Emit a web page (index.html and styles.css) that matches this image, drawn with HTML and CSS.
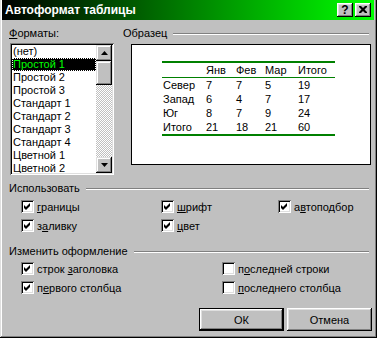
FILE: index.html
```html
<!DOCTYPE html>
<html lang="ru">
<head>
  <meta charset="UTF-8" />
  <title>Автоформат таблицы</title>
  <link rel="stylesheet" href="styles.css">
</head>
<body>
  <div class="window">
    <div class="titlebar">
      <span class="title">Автоформат таблицы</span>
      <div class="title-buttons">
        <span class="tbtn help">?</span>
        <span class="tbtn">
          <svg width="8" height="7" viewBox="0 0 8 7"><path d="M0 0h2l2 2 2-2h2v1l-2.5 2.5 2.5 2.5v1h-2l-2-2-2 2h-2v-1l2.5-2.5-2.5-2.5z" fill="#000"/></svg>
        </span>
      </div>
    </div>

    <div class="top">
      <div class="formats">
        <div class="label"><u>Ф</u>орматы:</div>
        <div class="listbox">
          <ul class="items">
            <li>(нет)</li>
            <li class="sel">Простой 1</li>
            <li>Простой 2</li>
            <li>Простой 3</li>
            <li>Стандарт 1</li>
            <li>Стандарт 2</li>
            <li>Стандарт 3</li>
            <li>Стандарт 4</li>
            <li>Цветной 1</li>
            <li>Цветной 2</li>
          </ul>
          <div class="scrollbar">
            <div class="sb-btn"><svg width="7" height="4" viewBox="0 0 7 4"><path d="M3.5 0L7 4H0z" fill="#000"/></svg></div>
            <div class="thumb"></div>
            <div class="track"></div>
            <div class="sb-btn"><svg width="7" height="4" viewBox="0 0 7 4"><path d="M0 0h7L3.5 4z" fill="#000"/></svg></div>
          </div>
        </div>
      </div>

      <div class="sample">
        <div class="group-head"><span>Образец</span><span class="rule"></span></div>
        <div class="preview">
          <table>
            <colgroup><col class="c0"><col class="c1"><col class="c2"><col class="c3"><col class="c4"></colgroup>
            <thead>
              <tr><th></th><th>Янв</th><th>Фев</th><th>Мар</th><th>Итого</th></tr>
            </thead>
            <tbody>
              <tr><td>Север</td><td>7</td><td>7</td><td>5</td><td>19</td></tr>
              <tr><td>Запад</td><td>6</td><td>4</td><td>7</td><td>17</td></tr>
              <tr><td>Юг</td><td>8</td><td>7</td><td>9</td><td>24</td></tr>
              <tr><td>Итого</td><td>21</td><td>18</td><td>21</td><td>60</td></tr>
            </tbody>
          </table>
        </div>
      </div>
    </div>

    <div class="group use">
      <div class="group-head"><span>Использовать</span><span class="rule"></span></div>
      <div class="checks">
        <div class="check"><span class="cb on"></span><span><u>г</u>раницы</span></div>
        <div class="check"><span class="cb on"></span><span><u>ш</u>рифт</span></div>
        <div class="check"><span class="cb on"></span><span>а<u>в</u>топодбор</span></div>
        <div class="check"><span class="cb on"></span><span>з<u>а</u>ливку</span></div>
        <div class="check"><span class="cb on"></span><span><u>ц</u>вет</span></div>
      </div>
    </div>

    <div class="group change">
      <div class="group-head"><span>Изменить оформление</span><span class="rule"></span></div>
      <div class="checks">
        <div class="check"><span class="cb on"></span><span>строк <u>з</u>аголовка</span></div>
        <div class="check"><span class="cb"></span><span>п<u>о</u>следней строки</span></div>
        <div class="check"><span class="cb on"></span><span>п<u>е</u>рвого столбца</span></div>
        <div class="check"><span class="cb"></span><span><u>п</u>оследнего столбца</span></div>
      </div>
    </div>

    <div class="buttons">
      <div class="btn default">ОК</div>
      <div class="btn">Отмена</div>
    </div>
  </div>
</body>
</html>
```

FILE: styles.css
```css
* {
  box-sizing: border-box;
}

body {
  margin: 0;
  background: #c0c0c0;
  font-family: "Liberation Sans", Arial, sans-serif;
  font-size: 11px;
  color: #000;
}

u {
  text-decoration-thickness: 1px;
  text-underline-offset: 1px;
}

.window {
  width: 377px;
  height: 338px;
  background: #c0c0c0;
  box-shadow: inset -1px -1px #000, inset 1px 0 #dfdfdf, inset -2px -2px #808080, inset 2px 0 #fff;
  overflow: hidden;
}

/* title bar */
.titlebar {
  height: 20px;
  margin: 0 3px 0 2px;
  display: flex;
  align-items: center;
  padding: 0 3px 1px 3px;
  background: linear-gradient(to right, #000 0%, #00ff00 100%);
}

.title {
  color: #fff;
  font-weight: bold;
  font-size: 12px;
}

.title-buttons {
  margin-left: auto;
  display: flex;
  gap: 2px;
}

.tbtn {
  width: 16px;
  height: 14px;
  display: flex;
  align-items: center;
  justify-content: center;
  background: #c0c0c0;
  box-shadow: inset -1px -1px #000, inset 1px 1px #fff, inset -2px -2px #808080, inset 2px 2px #dfdfdf;
}

.tbtn.help {
  font-weight: bold;
  font-size: 12px;
  line-height: 14px;
}

/* top part */
.top {
  display: flex;
  margin-top: 7px;
}

.formats {
  margin-left: 9px;
  width: 105px;
}

.label {
  height: 13px;
  line-height: 13px;
}

.listbox {
  margin: 3px 0 0 1px;
  width: 104px;
  height: 132px;
  padding: 2px;
  display: flex;
  background: #fff;
  box-shadow: inset 1px 1px #808080, inset -1px -1px #fff, inset 2px 2px #000, inset -2px -2px #dfdfdf;
}

.items {
  flex: 1;
  list-style: none;
  margin: 0;
  padding: 0;
  overflow: hidden;
}

.items li {
  height: 13px;
  line-height: 13px;
  padding-left: 1px;
  white-space: nowrap;
}

.items li.sel {
  background: #000;
  color: #00ff00;
  outline: 1px dotted #fff;
  outline-offset: -1px;
}

.scrollbar {
  width: 16px;
  display: flex;
  flex-direction: column;
}

.sb-btn,
.thumb {
  background: #c0c0c0;
  box-shadow: inset -1px -1px #000, inset 1px 1px #dfdfdf, inset -2px -2px #808080, inset 2px 2px #fff;
}

.sb-btn {
  height: 16px;
  display: flex;
  align-items: center;
  justify-content: center;
}

.thumb {
  height: 24px;
}

.track {
  flex: 1;
  background-image: repeating-conic-gradient(#fff 0 25%, #c0c0c0 0 50%);
  background-size: 2px 2px;
}

.sample {
  margin-left: 9px;
  width: 247px;
}

.group-head {
  display: flex;
  align-items: center;
  height: 13px;
  line-height: 13px;
  white-space: nowrap;
}

.rule {
  flex: 1;
  height: 2px;
  margin-left: 6px;
  border-top: 1px solid #808080;
  border-bottom: 1px solid #fff;
}

.sample .rule {
  margin-right: 1px;
}

.preview {
  margin: 4px 0 0 8px;
  width: 240px;
  height: 121px;
  border: 1px solid #000;
  background: #fff;
  padding: 16px 0 0 30px;
}

.preview table {
  border-collapse: collapse;
  table-layout: fixed;
  width: 173px;
  border-top: 2px solid #008000;
  border-bottom: 2px solid #008000;
}

.c0 { width: 43px; }
.c1 { width: 30px; }
.c2 { width: 29px; }
.c3 { width: 33px; }
.c4 { width: 38px; }

.preview thead tr {
  border-bottom: 1px solid #008000;
}

.preview th,
.preview td {
  height: 14px;
  line-height: 14px;
  padding: 0 0 0 1px;
  font-weight: normal;
  text-align: left;
  white-space: nowrap;
}

/* option groups */
.group {
  padding: 0 8px 0 9px;
}

.use {
  margin-top: 7px;
}

.change {
  margin-top: 10px;
}

.checks {
  display: grid;
  padding-left: 12px;
}

.use .checks {
  margin-top: 2px;
  grid-template-columns: 140px 117px 1fr;
}

.change .checks {
  margin-top: 1px;
  grid-template-columns: 201px 1fr;
}

.check {
  display: flex;
  align-items: center;
  height: 19px;
  white-space: nowrap;
}

.cb {
  width: 13px;
  height: 13px;
  margin-right: 3px;
  flex: none;
  background: #fff;
  box-shadow: inset 1px 1px #808080, inset -1px -1px #fff, inset 2px 2px #000, inset -2px -2px #dfdfdf;
}

.cb.on {
  background: #fff url("data:image/svg+xml,%3Csvg xmlns='http://www.w3.org/2000/svg' width='7' height='7'%3E%3Cpath d='M0 2L2 4L6 0V3L2 7L0 5Z' fill='%23000'/%3E%3C/svg%3E") no-repeat 3px 3px;
}

/* buttons */
.buttons {
  display: flex;
  justify-content: flex-end;
  gap: 3px;
  margin-top: 11px;
  padding-right: 5px;
}

.btn {
  width: 85px;
  height: 23px;
  display: flex;
  align-items: center;
  justify-content: center;
  background: #c0c0c0;
  box-shadow: inset -1px -1px #000, inset 1px 1px #fff, inset -2px -2px #808080, inset 2px 2px #dfdfdf;
}

.btn.default {
  box-shadow: inset 0 0 0 1px #000, inset -2px -2px #000, inset 2px 2px #fff, inset -3px -3px #808080, inset 3px 3px #dfdfdf;
}
```
